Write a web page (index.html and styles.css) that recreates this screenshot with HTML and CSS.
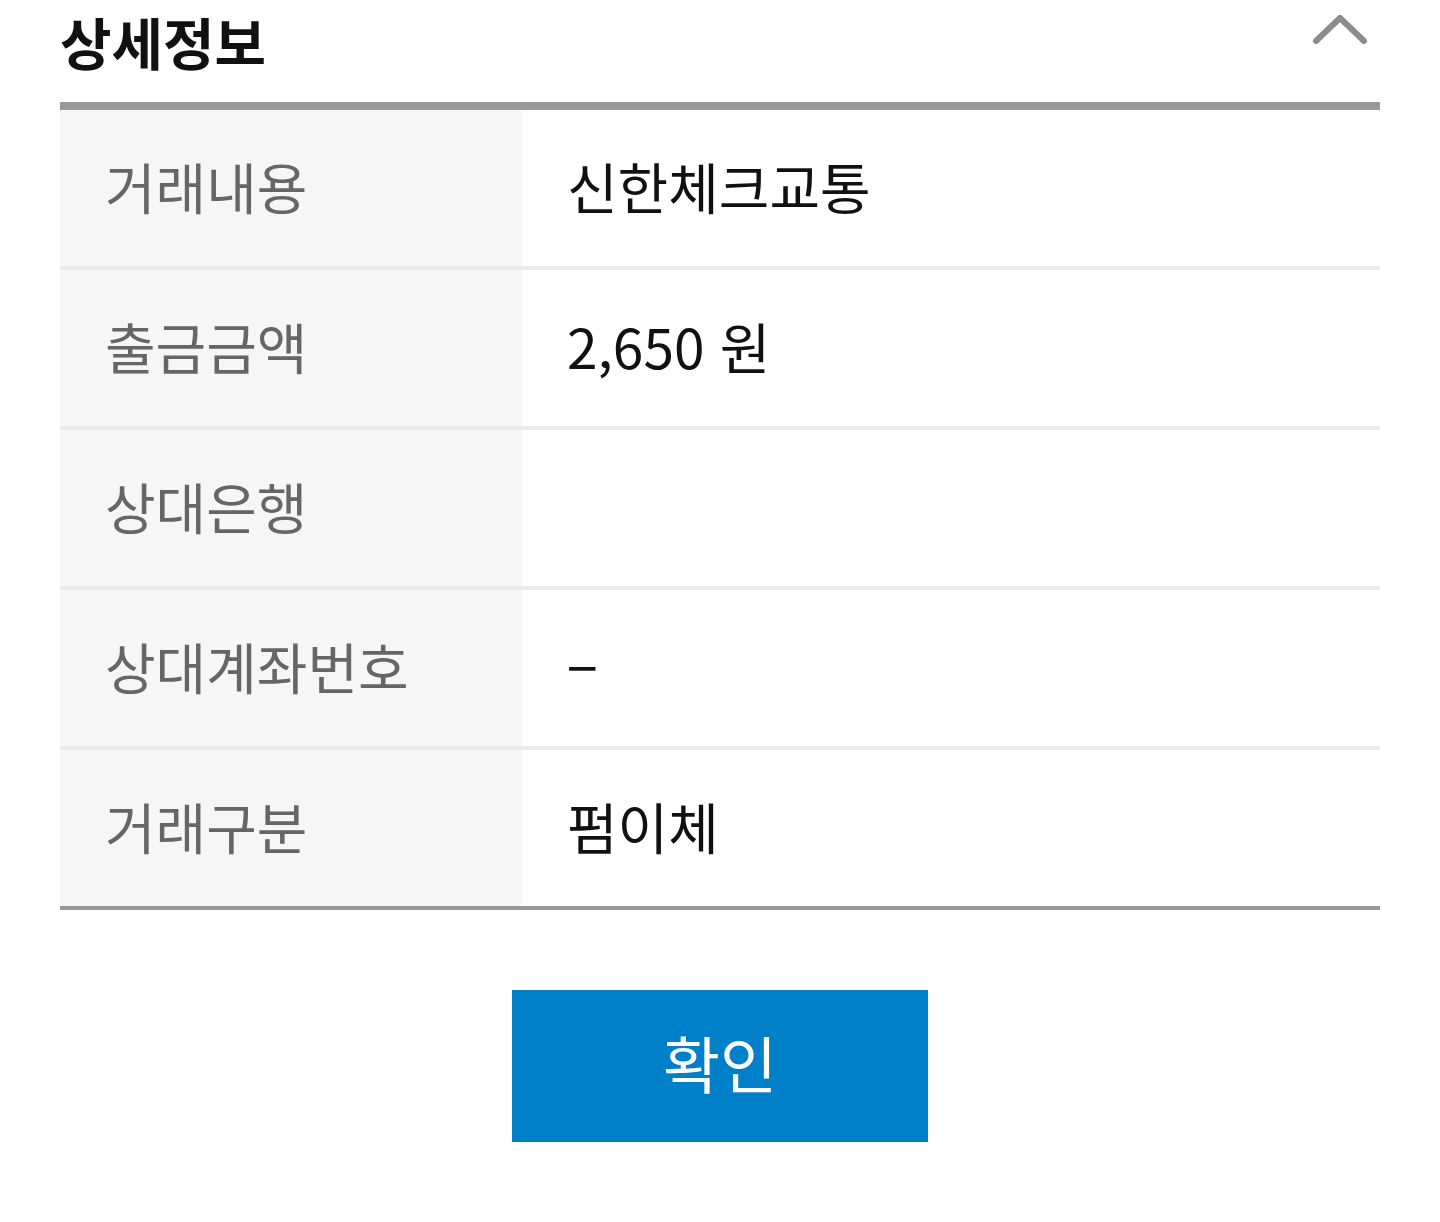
FILE: index.html
```html
<!DOCTYPE html>
<html lang="ko">
<head>
<meta charset="utf-8">
<title>상세정보</title>
<link rel="stylesheet" href="styles.css">
</head>
<body>
<main class="page">
  <header class="section-head">
    <h1 class="section-title">상세정보</h1>
    <button class="toggle" type="button" aria-label="접기">
      <svg width="60" height="40" viewBox="0 0 60 40"><polyline points="6,26 30,3 54,26" fill="none" stroke="#8c8c8c" stroke-width="6" stroke-linecap="round" stroke-linejoin="round"/></svg>
    </button>
  </header>
  <dl class="detail">
    <div class="row"><dt class="label">거래내용</dt><dd class="value">신한체크교통</dd></div>
    <div class="row"><dt class="label">출금금액</dt><dd class="value">2,650 원</dd></div>
    <div class="row"><dt class="label">상대은행</dt><dd class="value"></dd></div>
    <div class="row"><dt class="label">상대계좌번호</dt><dd class="value">−</dd></div>
    <div class="row"><dt class="label">거래구분</dt><dd class="value">펌이체</dd></div>
  </dl>
  <div class="actions">
    <button class="confirm" type="button">확인</button>
  </div>
</main>
</body>
</html>
```

FILE: styles.css
```css
* { box-sizing: border-box; }
html, body { margin: 0; padding: 0; background: #fff; }
body {
  font-family: "Noto Sans CJK KR", "Noto Sans", sans-serif;
  color: #111;
}
.page { padding: 0 60px; }
.section-head {
  display: flex;
  align-items: flex-start;
  justify-content: space-between;
  height: 110px;
  border-bottom: 8px solid #999;
}
.section-title {
  margin: 0;
  padding: 0;
  font-size: 56px;
  font-weight: 700;
  color: #111;
  line-height: normal;
}
.toggle {
  border: 0;
  background: none;
  padding: 0;
  margin: 15px 10px 0 0;
  width: 60px;
  height: 40px;
  cursor: pointer;
}
.toggle svg { display: block; }
.detail { margin: 0; }
.row {
  display: flex;
  height: 160px;
  border-bottom: 4px solid #ebebeb;
}
.row:last-child { border-bottom-color: #999; }
.label {
  width: 462px;
  flex: none;
  margin: 0;
  background: #f6f6f6;
  display: flex;
  align-items: center;
  padding-left: 45px;
  padding-bottom: 6px;
  font-size: 55px;
  color: #666;
}
.value {
  margin: 0;
  display: flex;
  align-items: center;
  padding-left: 45px;
  padding-bottom: 6px;
  font-size: 55px;
  color: #111;
}
.actions {
  display: flex;
  justify-content: center;
  padding-top: 80px;
}
.confirm {
  width: 416px;
  height: 152px;
  border: 0;
  background: #0080c8;
  color: #fff;
  font-family: "Noto Sans CJK KR", "Noto Sans", sans-serif;
  font-size: 62px;
  padding: 0 0 8px;
}
```
